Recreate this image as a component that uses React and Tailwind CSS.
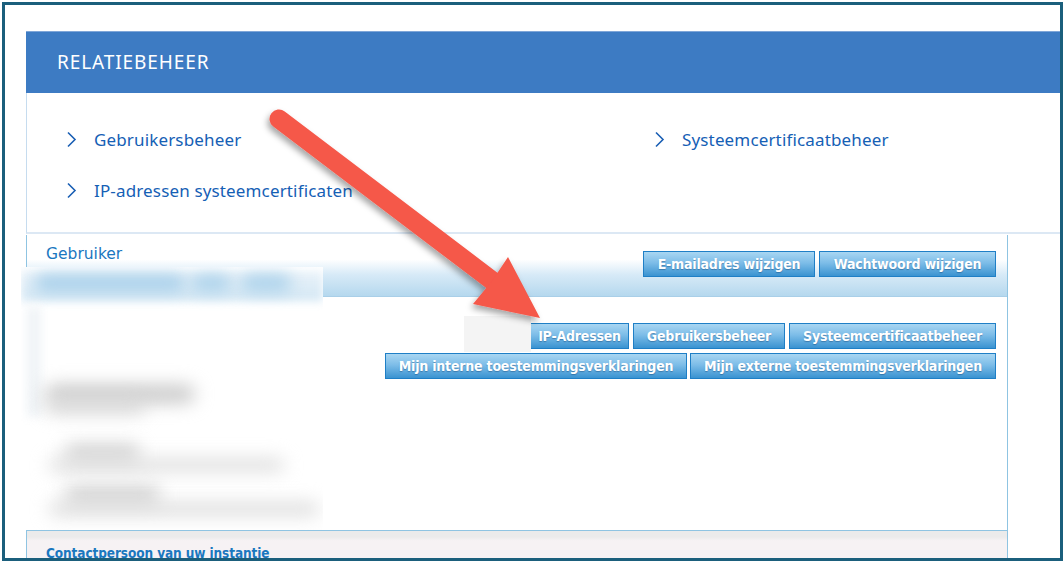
import React from "react";

function Chevron() {
  return (
    <svg width="11" height="17" viewBox="0 0 11 17" className="shrink-0">
      <polyline points="2,1.5 9,8.5 2,15.5" fill="none" stroke="#1a5fb4" strokeWidth="1.6" />
    </svg>
  );
}

function NavLink({ label }) {
  return (
    <div className="flex items-center gap-[17px] h-[22px]">
      <Chevron />
      <span className="text-[17px] text-[#1560b5] leading-none tracking-[0.15px]" style={{ fontFamily: "'Noto Sans', 'Open Sans', sans-serif" }}>
        {label}
      </span>
    </div>
  );
}

function Btn({ children, w }) {
  return (
    <div
      className={`${w} h-[26px] flex items-center justify-center border border-[#1f7fc6] bg-[linear-gradient(180deg,#a9d6f2_0%,#7dbde8_45%,#3a93d1_100%)] text-white font-bold text-[14px] tracking-[-0.2px] leading-none [text-shadow:0_1px_1px_rgba(0,40,90,0.35)]`}
      style={{ fontFamily: "'DejaVu Sans Condensed', 'Liberation Sans Narrow', 'DejaVu Sans', sans-serif" }}
    >
      {children}
    </div>
  );
}

export default function App() {
  return (
    <div className="w-[1064px] h-[562px] bg-white relative overflow-hidden">
      <div className="ml-[2px] mt-[2px] w-[1061px] h-[559px] border-[3px] border-[#1b5f7c] overflow-hidden">
        <div className="pl-[21px] pt-[26px] w-[1100px]">
          {/* Relatiebeheer header */}
          <div className="h-[62px] bg-[#3d7bc3] border-t border-[#7fa6d8] flex items-center pl-[31px]">
            <span className="text-white text-[19px] tracking-[0.9px]" style={{ fontFamily: "'Noto Sans', 'Open Sans', sans-serif" }}>
              RELATIEBEHEER
            </span>
          </div>

          {/* Link panel */}
          <div className="h-[141px] border-l border-[#c6dcef] border-b-2 border-b-[#dce8f4] pl-[39px] pt-[35px]">
            <div className="grid grid-cols-[588px_1fr] gap-y-[29px]">
              <NavLink label="Gebruikersbeheer" />
              <NavLink label="Systeemcertificaatbeheer" />
              <NavLink label="IP-adressen systeemcertificaten" />
            </div>
          </div>

          {/* Gebruiker box */}
          <div className="w-[982px] border-x border-[#8fc4e2] mt-[1px]">
            <div className="h-[62px] border-b border-[#a9cfe8] bg-[linear-gradient(180deg,#ffffff_0%,#ffffff_40%,#d7eaf7_65%,#b5d8ee_100%)] flex justify-between">
              <div
                className="pl-[19px] pt-[9px] text-[15.5px] text-[#1a77bf] leading-[20px]"
                style={{ fontFamily: "'DejaVu Sans', 'Open Sans', sans-serif" }}
              >
                Gebruiker
              </div>
              <div className="flex gap-[4px] pr-[11px] pt-[16px]">
                <Btn w="w-[172px]">E-mailadres wijzigen</Btn>
                <Btn w="w-[177px]">Wachtwoord wijzigen</Btn>
              </div>
            </div>

            <div className="h-[233px] pt-[26px] pr-[11px] flex flex-col items-end gap-[4px]">
              <div className="flex gap-[4px]">
                <Btn w="w-[99px]">IP-Adressen</Btn>
                <Btn w="w-[152px]">Gebruikersbeheer</Btn>
                <Btn w="w-[207px]">Systeemcertificaatbeheer</Btn>
              </div>
              <div className="flex gap-[3px]">
                <Btn w="w-[302px]">Mijn interne toestemmingsverklaringen</Btn>
                <Btn w="w-[306px]">Mijn externe toestemmingsverklaringen</Btn>
              </div>
            </div>

            <div className="h-[40px] border-t border-[#8fc4e2] bg-[linear-gradient(180deg,#ebebeb_0%,#ebebeb_15%,#f6f2f4_25%,#f6f2f4_100%)] pl-[19px] pt-[9px]">
              <span
                className="text-[13.5px] font-bold text-[#1a77bf] tracking-[-0.1px]"
                style={{ fontFamily: "'DejaVu Sans Condensed', 'DejaVu Sans', sans-serif" }}
              >
                Contactpersoon van uw instantie
              </span>
            </div>
          </div>
        </div>
      </div>

      {/* Obscured personal details */}
      <div className="absolute left-[21px] top-[267px] w-[302px] h-[263px] bg-white overflow-hidden">
        <div className="absolute left-0 top-[4px] w-[302px] h-[30px] bg-[linear-gradient(180deg,#eaf3fa,#d3e7f4)] blur-[4px]" />
        <div className="absolute left-[14px] top-[8px] w-[150px] h-[16px] rounded-full bg-[#a3cde9] blur-[8px]" />
        <div className="absolute left-[170px] top-[8px] w-[40px] h-[16px] rounded-full bg-[#a8d0ea] blur-[8px]" />
        <div className="absolute left-[220px] top-[8px] w-[50px] h-[16px] rounded-full bg-[#a8d0ea] blur-[8px]" />
        <div className="absolute left-[6px] top-[40px] w-[14px] h-[110px] bg-[#f0f4f7] blur-[5px]" />
        <div className="absolute left-[24px] top-[118px] w-[150px] h-[18px] rounded-full bg-[#c8c8c8] blur-[9px]" />
        <div className="absolute left-[24px] top-[134px] w-[100px] h-[12px] rounded-full bg-[#d4d4d4] blur-[9px]" />
        <div className="absolute left-[44px] top-[178px] w-[75px] h-[16px] rounded-full bg-[#cdcdcd] blur-[9px]" />
        <div className="absolute left-[28px] top-[192px] w-[235px] h-[12px] rounded-full bg-[#dadada] blur-[9px]" />
        <div className="absolute left-[44px] top-[220px] w-[95px] h-[16px] rounded-full bg-[#cccccc] blur-[9px]" />
        <div className="absolute left-[28px] top-[236px] w-[270px] h-[12px] rounded-full bg-[#d8d8d8] blur-[9px]" />
      </div>

      {/* Light patch left of the first button */}
      <div className="absolute left-[464px] top-[316px] w-[67px] h-[36px] bg-[#f4f4f4]" />

      {/* Pointer arrow */}
      <svg className="absolute left-0 top-0 pointer-events-none" width="1064" height="562" viewBox="0 0 1064 562">
        <defs>
          <filter id="arrowShadow" x="-20%" y="-20%" width="140%" height="140%">
            <feDropShadow dx="-2" dy="4" stdDeviation="3" floodColor="#000" floodOpacity="0.35" />
          </filter>
        </defs>
        <g filter="url(#arrowShadow)">
          <line x1="279" y1="119" x2="494" y2="282" stroke="#f5584a" strokeWidth="19" strokeLinecap="round" />
          <polygon points="508,257 540,318 473,304 492,281" fill="#f5584a" />
        </g>
      </svg>
    </div>
  );
}
